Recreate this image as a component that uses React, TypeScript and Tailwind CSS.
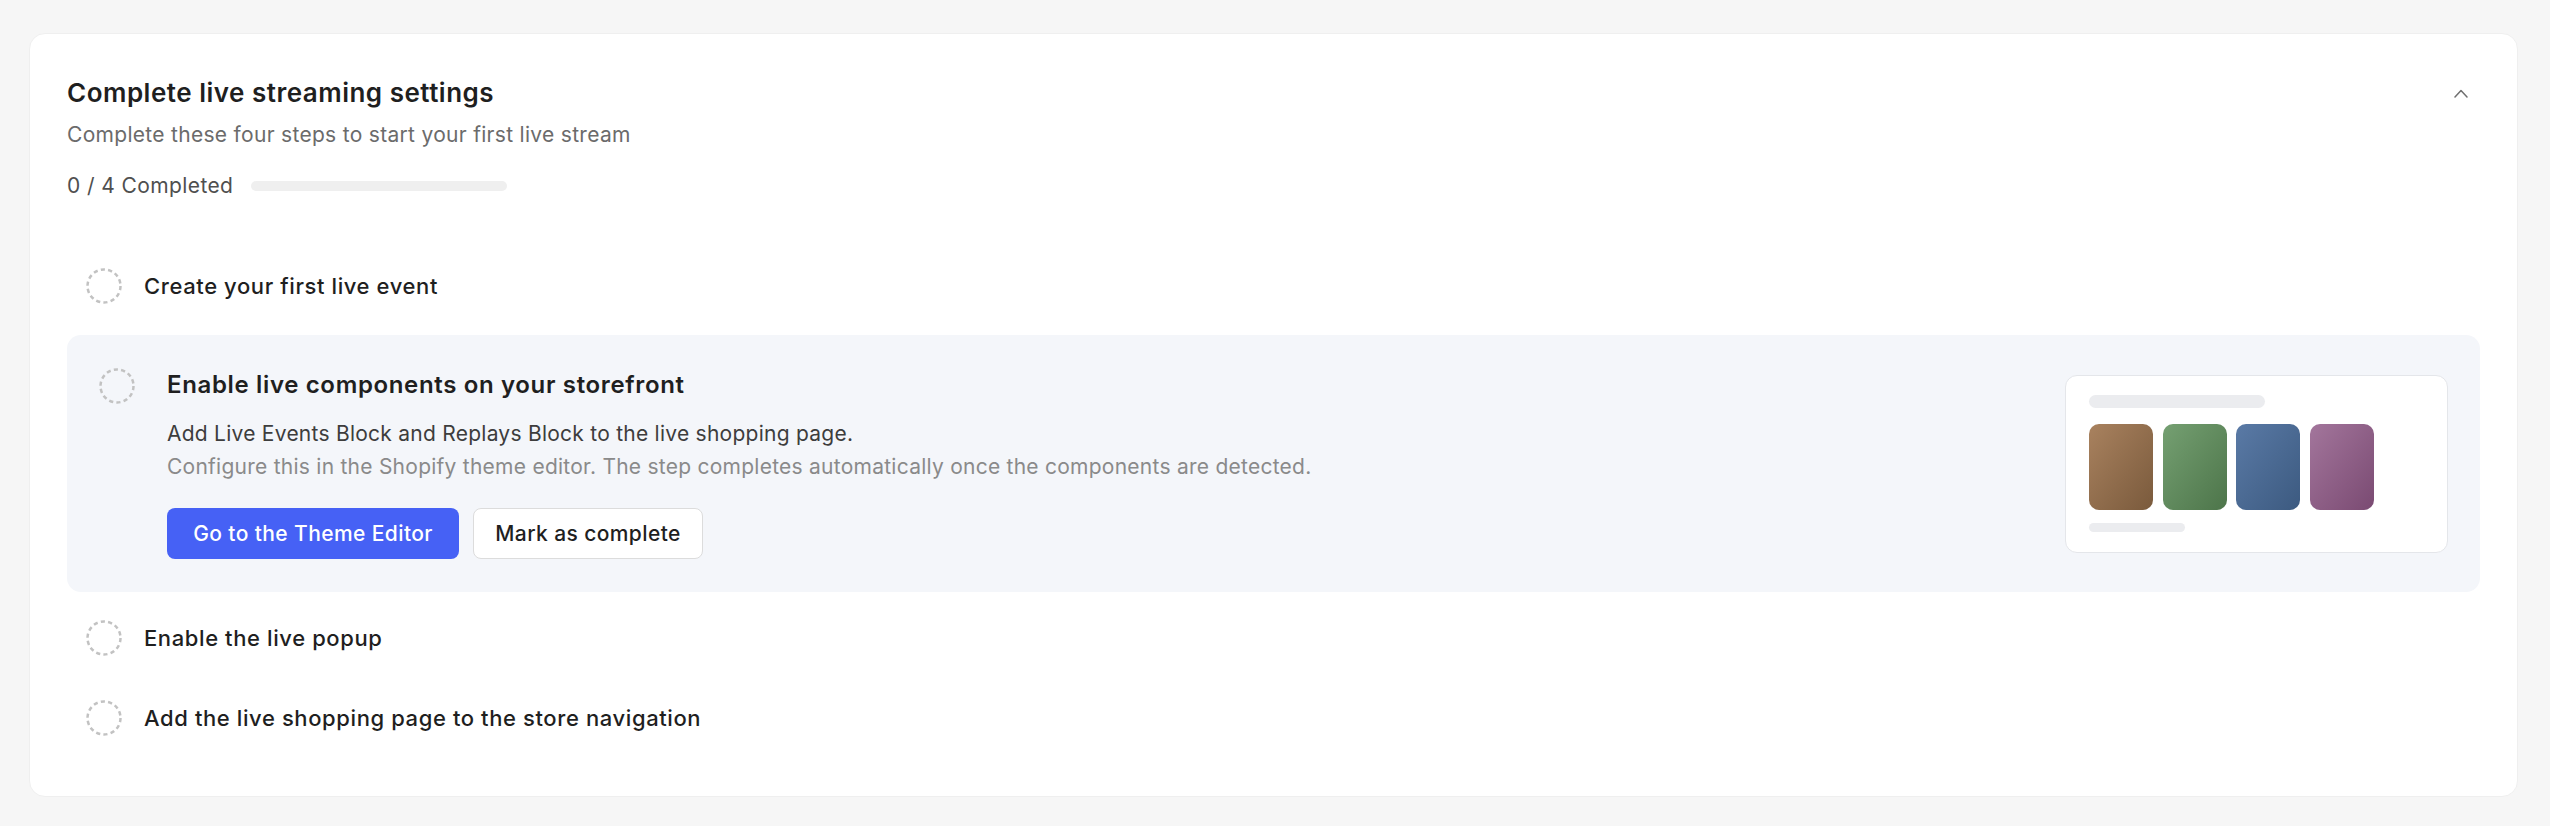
import React from "react";

function DashedCircle() {
  return (
    <svg width="36" height="36" viewBox="0 0 36 36" className="shrink-0">
      <circle cx="18" cy="18" r="16.5" fill="none" stroke="#c2c2c2" strokeWidth="2.5" strokeDasharray="4.2 3.2" />
    </svg>
  );
}

function StepRow({ label }: { label: string }) {
  return (
    <div className="flex h-[72px] items-center gap-[22px] pl-[19px]">
      <DashedCircle />
      <span className="text-[22px] font-medium tracking-[0.6px] text-[#1f1f1f]">{label}</span>
    </div>
  );
}

export default function App() {
  return (
    <div
      className="min-h-[826px] bg-[#f6f6f6] pl-[29px] pr-[32px] pt-[33px] pb-[29px]"
      style={{ fontFamily: "Inter, 'Noto Sans', sans-serif" }}
    >
      <div className="rounded-[16px] border border-[#efefef] bg-white px-[37px] pt-[41px] pb-[42px]">
        <div className="flex items-start justify-between">
          <div>
            <h1 className="text-[26px] font-semibold leading-[36px] tracking-[0.5px] text-[#1f1f1f]">
              Complete live streaming settings
            </h1>
            <p className="mt-[9px] text-[21px] leading-[30px] tracking-[0.3px] text-[#6b6b6b]">
              Complete these four steps to start your first live stream
            </p>
            <div className="mt-[21px] flex items-center gap-[18px]">
              <span className="text-[21px] leading-[30px] tracking-[0.4px] text-[#4f4f4f]">0 / 4 Completed</span>
              <div className="h-[10px] w-[256px] rounded-full bg-[#efefef]" />
            </div>
          </div>
          <button className="mr-[11px] mt-[10px] flex h-[16px] w-[16px] items-center justify-center">
            <svg width="14" height="9" viewBox="0 0 14 9">
              <polyline points="1,8 7,1.5 13,8" fill="none" stroke="#707070" strokeWidth="1.5" strokeLinecap="round" strokeLinejoin="round" />
            </svg>
          </button>
        </div>

        <div className="mt-[49px] flex flex-col">
          <StepRow label="Create your first live event" />

          <div className="mt-[13px] flex items-center justify-between rounded-[14px] bg-[#f4f6fa] pl-[32px] pr-[32px] pt-[33px] pb-[33px]">
            <div className="flex items-start gap-[32px]">
              <DashedCircle />
              <div>
                <div className="text-[24px] font-semibold leading-[34px] tracking-[0.65px] text-[#1f1f1f]">
                  Enable live components on your storefront
                </div>
                <div className="mt-[15px] text-[21px] leading-[33px] tracking-[0.25px]">
                  <div className="text-[#3d3d3d]">Add Live Events Block and Replays Block to the live shopping page.</div>
                  <div className="text-[#8a8a8a]">
                    Configure this in the Shopify theme editor. The step completes automatically once the components are detected.
                  </div>
                </div>
                <div className="mt-[25px] flex gap-[14px]">
                  <button className="h-[51px] w-[292px] rounded-[8px] bg-[#4661f5] text-[21px] font-medium tracking-[0.4px] text-white">
                    Go to the Theme Editor
                  </button>
                  <button className="h-[51px] w-[230px] rounded-[8px] border border-[#dcdcdc] bg-white text-[21px] font-medium tracking-[0.4px] text-[#1f1f1f]">
                    Mark as complete
                  </button>
                </div>
              </div>
            </div>

            <div className="flex h-[178px] w-[383px] flex-col rounded-[12px] border border-[#e4e6ea] bg-white pl-[23px] pt-[19px]">
              <div className="h-[13px] w-[176px] rounded-full bg-[#ebecef]" />
              <div className="mt-[16px] flex gap-[9.5px]">
                <div className="h-[86px] w-[64px] rounded-[10px] bg-gradient-to-br from-[#a9825f] to-[#7a5a3c]" />
                <div className="h-[86px] w-[64px] rounded-[10px] bg-gradient-to-br from-[#75a072] to-[#4d754a]" />
                <div className="h-[86px] w-[64px] rounded-[10px] bg-gradient-to-br from-[#5a7aa6] to-[#3c5a80]" />
                <div className="h-[86px] w-[64px] rounded-[10px] bg-gradient-to-br from-[#a3769c] to-[#7a4a72]" />
              </div>
              <div className="mt-[13px] h-[9px] w-[96px] rounded-full bg-[#ebecef]" />
            </div>
          </div>

          <div className="mt-[10px]">
            <StepRow label="Enable the live popup" />
          </div>
          <div className="mt-[8px]">
            <StepRow label="Add the live shopping page to the store navigation" />
          </div>
        </div>
      </div>
    </div>
  );
}
